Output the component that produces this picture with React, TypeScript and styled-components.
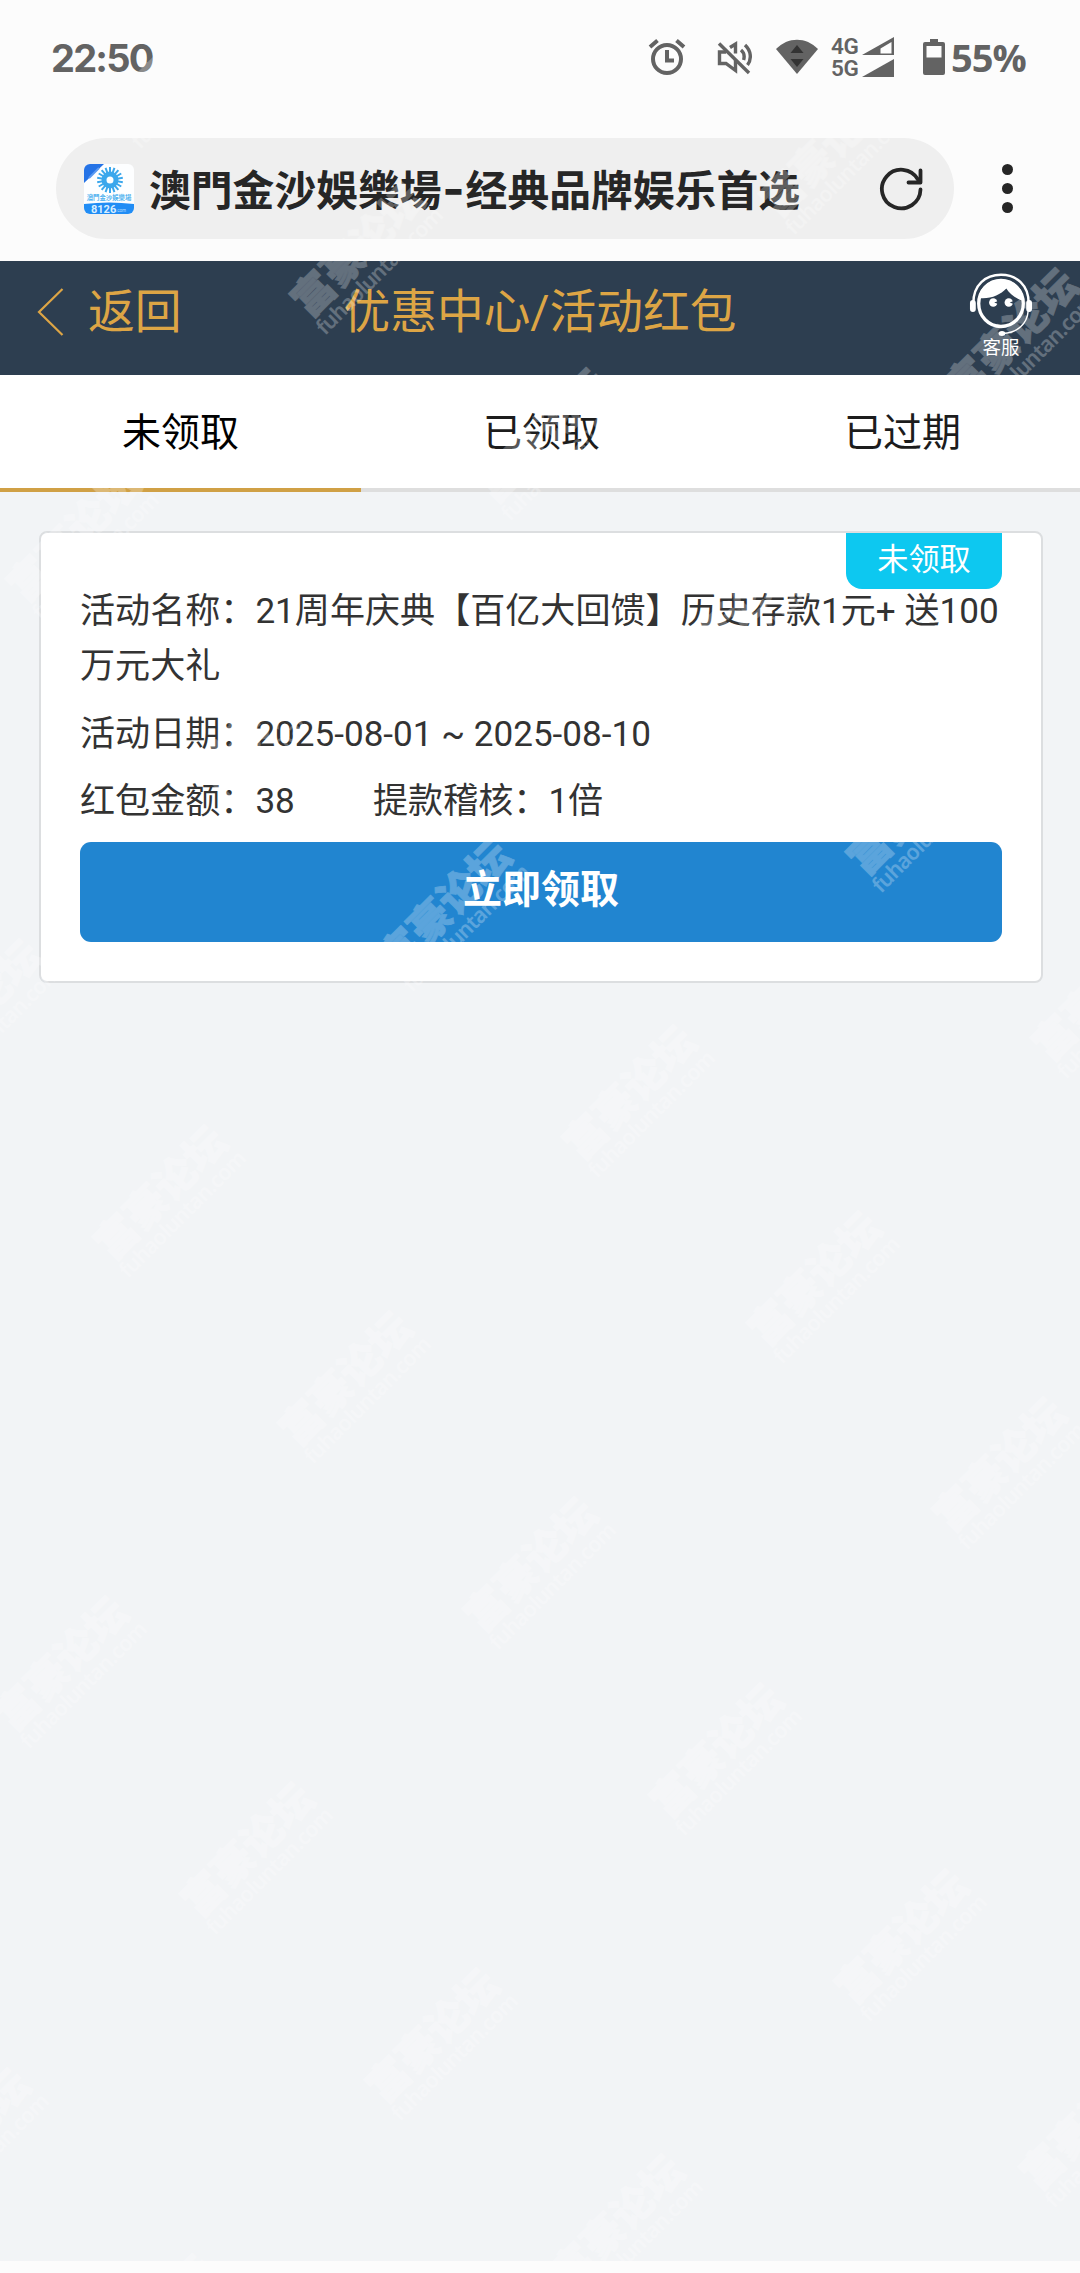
import React from "react";
import styled, { createGlobalStyle } from "styled-components";

const GlobalStyle = createGlobalStyle`
  * { box-sizing: border-box; }
  body {
    margin: 0;
    background: #fcfcfc;
    font-family: Roboto, "Noto Sans CJK SC", sans-serif;
    color: #333;
  }
  button { font: inherit; border: 0; padding: 0; background: none; color: inherit; }
`;

const Screen = styled.div`
  position: relative;
  width: 1080px;
  height: 2273px;
  overflow: hidden;
  display: flex;
  flex-direction: column;
  background: #fcfcfc;
`;

const StatusBar = styled.div`
  height: 120px;
  padding: 0 53px 0 51px;
  display: flex;
  justify-content: space-between;
  align-items: flex-start;
  color: #636363;
`;

const Clock = styled.span`
  margin-top: 33px;
  padding-right: 4px;
  font: 700 38px/50px Inter, sans-serif;
  letter-spacing: -1.8px;
`;

const StatusIcons = styled.div`
  display: flex;
  align-items: flex-start;
  margin-top: 33px;
  height: 50px;
`;

const IconSlot = styled.svg<{ $gap: number }>`
  display: block;
  flex: none;
  margin-right: ${(p) => p.$gap}px;
`;

const NetworkLabels = styled.div`
  width: 31px;
  display: flex;
  flex-direction: column;
  font: 600 22.5px/22px Roboto, sans-serif;
  letter-spacing: -0.3px;
  padding-top: 2px;
`;

const Percent = styled.span`
  font: 700 38px/48px "Open Sans", sans-serif;
  letter-spacing: -1px;
  width: 76px;
  white-space: nowrap;
`;

const AddressRow = styled.div`
  height: 141px;
  padding: 18px 0 0 56px;
  display: flex;
`;

const AddressPill = styled.div`
  width: 898px;
  height: 101px;
  border-radius: 51px;
  background: #efefef;
  padding: 0 30px 0 28px;
  display: flex;
  align-items: center;
`;

const PageTitle = styled.span`
  flex: 1;
  margin: 0 0 1px 15px;
  color: #262626;
  font: 700 41.8px/60px "Noto Sans CJK SC", sans-serif;
  white-space: nowrap;
`;

const Dash = styled.span`
  display: inline-block;
  width: 24px;
  text-align: center;
  font: 700 48px/40px Inter, sans-serif;
`;

const MenuButton = styled.button`
  width: 106px;
  height: 101px;
  display: flex;
  flex-direction: column;
  align-items: center;
  justify-content: center;
  gap: 8px;
`;

const Dot = styled.i`
  width: 11px;
  height: 11px;
  border-radius: 50%;
  background: #262626;
`;

const Header = styled.header`
  height: 114px;
  background: #2d3e50;
  color: #dda545;
  display: grid;
  grid-template-columns: 260px 1fr 260px;
  font-size: 46.8px;
  line-height: 102px;
`;

const BackButton = styled.button`
  display: flex;
  align-items: flex-start;
  padding-left: 36px;
  svg { margin: 26px 24px 0 0; }
`;

const HeaderTitle = styled.h1`
  margin: 0;
  font-size: 46.7px;
  font-weight: 400;
  line-height: 102px;
  text-align: center;
  white-space: nowrap;
`;

const SupportButton = styled.button`
  justify-self: end;
  width: 158px;
  display: flex;
  flex-direction: column;
  align-items: center;
  padding-top: 12px;
  color: #fff;
  font-size: 18.5px;
  line-height: 22px;
`;

const Tabs = styled.nav`
  height: 117px;
  display: grid;
  grid-template-columns: repeat(3, 361px);
  grid-template-rows: 117px;
  background: #fff;
`;

const Tab = styled.button<{ $active?: boolean }>`
  padding-top: 4px;
  border-bottom: 4px solid ${(p) => (p.$active ? "#d0a045" : "#dedede")};
  color: ${(p) => (p.$active ? "#000" : "#1c1c1c")};
  font-size: 39px;
  line-height: 109px;
  display: flex;
  justify-content: center;
`;

const Content = styled.main`
  flex: 1;
  background: #f2f4f6;
  padding: 39px 37px 0 39px;
`;

const Card = styled.article`
  position: relative;
  height: 452px;
  background: #fff;
  border: 2px solid #dcdee0;
  border-radius: 8px;
  padding: 51px 39px 0;
  font-size: 35.1px;
  line-height: 55px;
`;

const StatusBadge = styled.span`
  position: absolute;
  top: 0;
  right: 39px;
  width: 156px;
  height: 56px;
  border-radius: 0 0 16px 16px;
  background: #0dc8f0;
  color: #fff;
  font-size: 31.2px;
  line-height: 54px;
  text-align: center;
`;

const Field = styled.p`
  margin: 0 -10px 12px 0;
  display: flex;
`;

const FieldName = styled(Field)`
  display: block;
  margin-bottom: 13px;
`;

const Amount = styled.span`
  width: 293px;
`;

const ClaimButton = styled.button`
  width: 922px;
  height: 100px;
  margin-top: 13px;
  border-radius: 11px;
  background: #2185d0;
  color: #fff;
  font-size: 39px;
  font-weight: 700;
  line-height: 97px;
  display: flex;
  justify-content: center;
`;

const BottomBar = styled.footer`
  height: 12px;
  background: #fcfcfc;
`;

const WatermarkLayer = styled.div`
  position: absolute;
  inset: 0;
  overflow: hidden;
  opacity: 0.26;
  pointer-events: none;
`;

const Watermark = styled.div`
  position: absolute;
  width: 168px;
  height: 66px;
  margin: -33px 0 0 -84px;
  transform: rotate(-45deg);
  color: #fff;
  white-space: nowrap;
  display: flex;
  flex-direction: column;
  align-items: center;
`;

const WatermarkName = styled.div`
  font: 900 41.5px/42px "Noto Sans CJK SC", sans-serif;
  -webkit-text-stroke: 0.8px #fff;
`;

const WatermarkSite = styled.div`
  font: 600 21.5px/24px "Noto Sans", sans-serif;
  letter-spacing: -0.8px;
`;

const marks: { x: number; y: number }[] = [];
for (let row = -8; row <= 12; row++) {
  for (let col = -4; col <= 4; col++) {
    const x = 636 + row * 185.2 + col * 469;
    const y = 1099 + row * 186 - col * 99.5;
    if (x > -80 && x < 1160 && y > -80 && y < 2350) marks.push({ x, y });
  }
}

const rays = Array.from({ length: 18 }, (_, i) => i * 20);

function AlarmIcon() {
  return (
    <IconSlot $gap={30} width="38" height="44" fill="none" stroke="#636363" strokeWidth="4">
      <circle cx="19" cy="26" r="14" />
      <path d="M19 17v10.5h7M2 14l7.500-6.500M36 14l-7.500-6.500" />
    </IconSlot>
  );
}

function MutedIcon() {
  return (
    <IconSlot $gap={23} width="36" height="44" fill="none" stroke="#636363" strokeWidth="3.400">
      <path d="M3 10.500 33 40" />
      <path d="M10 19H3.500v11.500H10l9.500 7V27M14 14.500l5.500-3.500v9.500" />
      <path d="M25 17c3 2.500 3.800 6 2.600 10M29 12c6 5.500 7 14 2.500 20" />
    </IconSlot>
  );
}

function WifiIcon() {
  return (
    <IconSlot $gap={12} width="44" height="44">
      <path d="M1 16C13 3.500 31 3.500 43 16L22 41z" fill="#636363" />
      <path d="M22 12l6.500 8h-13zM22 34l6.500-8h-13z" fill="#333" />
    </IconSlot>
  );
}

function SignalIcon() {
  return (
    <IconSlot $gap={26} width="34" height="46" fill="#636363">
      <path fillRule="evenodd" d="M0 22 32 4v18zM18.500 15.500v5H29.500V9z" />
      <path d="M0 44 32 26v18z" />
    </IconSlot>
  );
}

function BatteryIcon() {
  return (
    <IconSlot $gap={5} width="24" height="44">
      <path
        fill="#636363"
        fillRule="evenodd"
        d="M8 6h8v3h5q2 0 2 2v29q0 2-2 2H3q-2 0-2-2V11q0-2 2-2h5zM4.500 13v11.500h15V13z"
      />
    </IconSlot>
  );
}

function SiteIcon() {
  return (
    <svg width="50" height="50" viewBox="0 0 50 50">
      <defs>
        <clipPath id="site">
          <rect width="50" height="50" rx="6" />
        </clipPath>
      </defs>
      <g clipPath="url(#site)">
        <rect width="50" height="50" fill="#fdfeff" />
        <path d="M0 0h20L0 19z" fill="#2573e6" />
        <path d="M5 14 15 4" stroke="#5b9af2" strokeWidth="2" />
        <g stroke="#3ba7ec" strokeWidth="2">
          {rays.map((a) => (
            <path key={a} d="M26 11V3" transform={`rotate(${a} 26 16)`} />
          ))}
        </g>
        <circle cx="26" cy="16" r="6" fill="none" stroke="#3ba7ec" strokeWidth="5" />
        <path d="M0 40q25-3 50 0v10H0z" fill="#218df5" />
        <text x="25" y="36" textAnchor="middle" fontSize="6.400" fontWeight="700" fill="#55b4ef" fontFamily="Noto Sans CJK SC">
          澳門金沙娛樂場
        </text>
        <text x="7" y="48.500" fontSize="11" fontWeight="700" fill="#d9efff" fontFamily="Roboto">
          8126
        </text>
        <text x="32" y="48" fontSize="4.500" fill="#b8deff" fontFamily="Roboto">
          .com
        </text>
      </g>
    </svg>
  );
}

function ReloadIcon() {
  return (
    <svg width="46" height="46" fill="none" stroke="#262626" strokeWidth="3.800" strokeLinecap="round" strokeLinejoin="round">
      <path d="M42.500 23.500A19.300 19.300 0 1 1 40 13.500" />
      <path d="M42.500 4.500v12H30.500" />
    </svg>
  );
}

function SupportIcon() {
  return (
    <svg width="64" height="64" viewBox="0 0 66 64" preserveAspectRatio="none">
      <circle cx="33" cy="30.500" r="23" fill="none" stroke="#fff" strokeWidth="3.400" />
      <path d="M9.500 28C10 15 20 6.500 33 6.500S56 15 56.500 28C49 26 42 21 38.500 15.500 32 22 22 26.500 9.500 25z" fill="#fff" />
      <path d="M4.500 30C4.500 12 17 1.800 33 1.800S61.500 12 61.500 30" fill="none" stroke="#fff" strokeWidth="2.500" />
      <rect x="1" y="27" width="6" height="12" rx="3" fill="#fff" />
      <rect x="59" y="27" width="6" height="12" rx="3" fill="#fff" />
      <path d="M61 38C60 51 50 59.500 35 60.500" fill="none" stroke="#fff" strokeWidth="1.500" />
      <ellipse cx="34" cy="60.500" rx="3.500" ry="2.500" fill="#fff" />
      <circle cx="25" cy="29.500" r="4.300" fill="#fff" />
      <circle cx="41" cy="29.500" r="4.300" fill="#fff" />
      <path d="M26 29.500l4-1.500v3zM42 29.500l4-1.500v3z" fill="#2d3e50" />
    </svg>
  );
}

export default function App() {
  return (
    <Screen>
      <GlobalStyle />
      <StatusBar>
        <Clock>22:50</Clock>
        <StatusIcons>
          <AlarmIcon />
          <MutedIcon />
          <WifiIcon />
          <NetworkLabels>
            <span>4G</span>
            <span>5G</span>
          </NetworkLabels>
          <SignalIcon />
          <BatteryIcon />
          <Percent>55%</Percent>
        </StatusIcons>
      </StatusBar>

      <AddressRow>
        <AddressPill>
          <SiteIcon />
          <PageTitle>
            澳門金沙娛樂場<Dash>-</Dash>经典品牌娱乐首选
          </PageTitle>
          <ReloadIcon />
        </AddressPill>
        <MenuButton aria-label="菜单">
          <Dot />
          <Dot />
          <Dot />
        </MenuButton>
      </AddressRow>

      <Header>
        <BackButton>
          <svg width="28" height="50" fill="none" stroke="#dda545" strokeWidth="2.200">
            <path d="M26.500 2 3 25l23.500 23" />
          </svg>
          返回
        </BackButton>
        <HeaderTitle>优惠中心/活动红包</HeaderTitle>
        <SupportButton>
          <SupportIcon />
          客服
        </SupportButton>
      </Header>

      <Tabs>
        <Tab $active>未领取</Tab>
        <Tab>已领取</Tab>
        <Tab>已过期</Tab>
      </Tabs>

      <Content>
        <Card>
          <StatusBadge>未领取</StatusBadge>
          <FieldName>活动名称：21周年庆典【百亿大回馈】历史存款1元+ 送100万元大礼</FieldName>
          <Field>活动日期：2025-08-01 ~ 2025-08-10</Field>
          <Field>
            <Amount>红包金额：38</Amount>
            <span>提款稽核：1倍</span>
          </Field>
          <ClaimButton>立即领取</ClaimButton>
        </Card>
      </Content>
      <BottomBar />

      <WatermarkLayer aria-hidden>
        {marks.map((m, i) => (
          <Watermark key={i} style={{ left: m.x, top: m.y }}>
            <WatermarkName>富豪论坛</WatermarkName>
            <WatermarkSite>fuhaoluntan.com</WatermarkSite>
          </Watermark>
        ))}
      </WatermarkLayer>
    </Screen>
  );
}
